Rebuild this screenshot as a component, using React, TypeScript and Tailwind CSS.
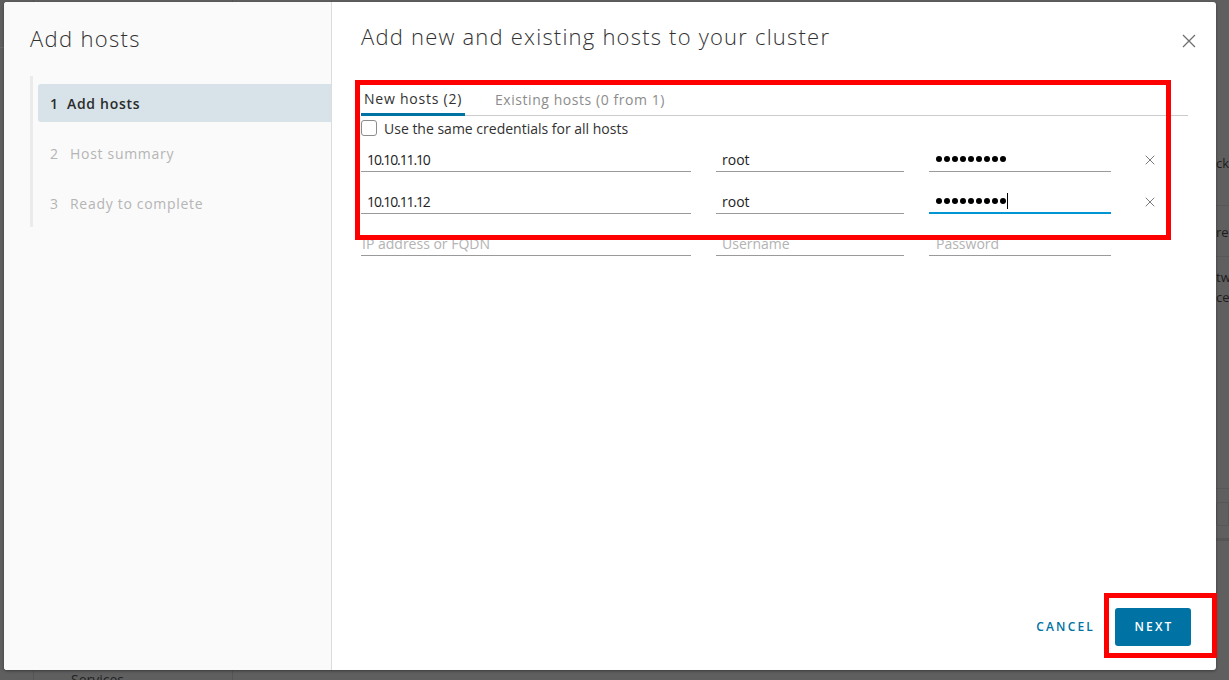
const hosts = [
  { ip: '10.10.11.10', user: 'root', focused: false },
  { ip: '10.10.11.12', user: 'root', focused: true },
];

const steps = ['Add hosts', 'Host summary', 'Ready to complete'];

const CloseIcon = ({ size, className }: { size: number; className?: string }) => (
  <svg width={size} height={size} viewBox="0 0 14 14" className={className} fill="none" stroke="currentColor" strokeWidth={1.3}>
    <path d="M1 1 13 13M13 1 1 13" />
  </svg>
);

const Dots = ({ count }: { count: number }) => (
  <div className="flex items-center gap-[2px]">
    {Array.from({ length: count }).map((_, i) => (
      <span key={i} className="block h-[6px] w-[6px] rounded-full bg-black" />
    ))}
  </div>
);

export default function App() {
  return (
    <div className="relative h-[680px] w-[1229px] overflow-hidden bg-[#5f5f5f] font-['Open_Sans','Liberation_Sans',sans-serif]">
      {/* page behind the overlay */}
      <div className="flex h-full">
        <div className="mt-[47px] w-[33px] border-t border-[#6a6a6a]" />
        <div className="flex w-[200px] flex-col justify-end border-x border-[#555]">
          <div className="h-[9px] overflow-hidden pl-[37px] text-[14px] leading-[18px] text-[#222]">Services</div>
        </div>
        <div className="flex flex-1 justify-end">
          <div className="w-[13px] overflow-hidden pt-[152px] text-[13px] text-[#1d1d1d]">
            <div className="h-[22px] whitespace-nowrap leading-[22px]">ck</div>
            <div className="mt-[31px] border-t border-[#575757] pt-[16px] whitespace-nowrap leading-[20px]">re</div>
            <div className="mt-[14px] border-t border-[#575757] pt-[10px] whitespace-nowrap leading-[20px]">tw</div>
            <div className="whitespace-nowrap leading-[20px]">ce</div>
            <div className="mt-[181px] border-t border-[#575757]" />
            <div className="mt-[13px] h-[24px] rounded-l-[3px] border border-[#575757]" />
            <div className="mt-[12px] h-[3px] bg-[#555]" />
          </div>
        </div>
      </div>

      {/* modal */}
      <div className="absolute left-[4px] top-[2px] flex h-[668px] w-[1212px] overflow-hidden rounded-[3px] bg-white shadow-[0_1px_3px_rgba(0,0,0,0.4)]">
        <aside className="flex w-[328px] flex-col border-r border-[#dcdcdc] bg-[#fafafa] pl-[26px]">
          <h2 className="pt-[22px] text-[22px] font-light leading-[28px] tracking-[0.06em] text-[#313131]">Add hosts</h2>
          <div className="mt-[24px] border-l-[3px] border-[#ebebeb] pb-[5px] pt-[8px]">
            <ul className="flex flex-col gap-[12px] pl-[5px]">
              {steps.map((s, i) => (
                <li
                  key={s}
                  className={`flex h-[38px] items-center rounded-l-[3px] pl-[12px] text-[14px] tracking-[0.05em] ${
                    i === 0 ? 'bg-[#d8e3e9] font-semibold text-[#2b2b2b]' : 'text-[#b5b5b5]'
                  }`}
                >
                  <span className="w-[17px]">{i + 1}</span>
                  <span className={i === 0 ? '' : 'pl-[3px]'}>{s}</span>
                </li>
              ))}
            </ul>
          </div>
        </aside>

        <section className="flex flex-1 flex-col pl-[29px] pr-[28px]">
          <div className="flex items-start justify-between pt-[20px]">
            <h1 className="text-[22px] font-light leading-[28px] tracking-[0.055em] text-[#333]">
              Add new and existing hosts to your cluster
            </h1>
            <CloseIcon size={14} className="mr-[-8px] mt-[12px] text-[#6f6f6f]" />
          </div>

          <div className="mt-[33px] flex border-b border-[#cccccc] text-[14px]">
            <div className="-mb-px flex h-[33px] w-[104px] items-center border-b-[3px] border-[#0072a3] pl-[3px] pt-[1px] tracking-[0.055em] text-[#313131]">
              New hosts (2)
            </div>
            <div className="ml-[27px] flex h-[32px] items-center px-[3px] tracking-[0.04em] text-[#8c8c8c]">
              Existing hosts (0 from 1)
            </div>
          </div>

          <label className="flex h-[24px] items-center gap-[7px] text-[14px] text-[#313131]">
            <span className="block h-[16px] w-[16px] rounded-[3px] border border-[#8c8c8c] bg-white" />
            Use the same credentials for all hosts
          </label>

          <div className="mt-[7px] flex flex-col gap-[17px] text-[14px] text-[#222]">
            {hosts.map((h) => (
              <div key={h.ip} className="flex items-end">
                <div className="flex h-[25px] w-[330px] items-center border-b border-[#9a9a9a] pl-[6px] tracking-[-0.08em]">{h.ip}</div>
                <div className="ml-[25px] flex h-[25px] w-[188px] items-center border-b border-[#9a9a9a] pl-[6px]">{h.user}</div>
                <div
                  className={`ml-[25px] flex h-[25px] w-[182px] items-center pl-[7px] ${
                    h.focused ? 'border-b-2 border-[#0095d3]' : 'border-b border-[#9a9a9a]'
                  }`}
                >
                  <Dots count={9} />
                  {h.focused && <span className="ml-[1px] block h-[16px] w-px bg-black" />}
                </div>
                <CloseIcon size={10} className="mb-[7px] ml-[34px] text-[#6f6f6f]" />
              </div>
            ))}
            <div className="flex items-end text-[#b3b3b3]">
              <div className="flex h-[25px] w-[330px] items-center border-b border-[#9a9a9a] pl-[1px]">IP address or FQDN</div>
              <div className="ml-[25px] flex h-[25px] w-[188px] items-center border-b border-[#9a9a9a] pl-[6px]">Username</div>
              <div className="ml-[25px] flex h-[25px] w-[182px] items-center border-b border-[#9a9a9a] pl-[7px]">Password</div>
            </div>
          </div>

          <div className="-mr-[3px] mt-auto flex items-center justify-end gap-[9px] pb-[24px]">
            <button className="h-[36px] px-[11px] text-[12px] font-semibold tracking-[0.18em] text-[#0072a3]">CANCEL</button>
            <button className="h-[38px] w-[76px] rounded-[3px] bg-[#0072a3] pl-[2px] text-[12px] font-semibold tracking-[0.18em] text-white">
              NEXT
            </button>
          </div>
        </section>
      </div>

      {/* annotation boxes */}
      <div className="pointer-events-none absolute left-[355px] top-[80px] h-[160px] w-[816px] border-[5px] border-[#ff0000]" />
      <div className="pointer-events-none absolute left-[1104px] top-[593px] h-[65px] w-[113px] border-[5px] border-[#ff0000]" />
    </div>
  );
}
